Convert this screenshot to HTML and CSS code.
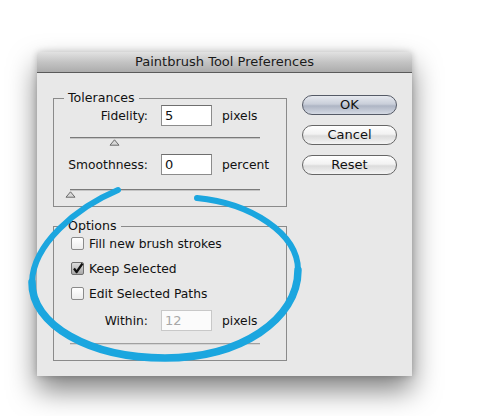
FILE: index.html
```html
<!DOCTYPE html>
<html>
<head>
<meta charset="utf-8">
<link rel="stylesheet" href="styles.css">
</head>
<body>
<div class="stage">
  <div class="dialog">
    <div class="titlebar">Paintbrush Tool Preferences</div>
    <div class="content">
      <div class="groups">
        <fieldset class="group tolerances">
          <legend>Tolerances</legend>
          <div class="row first">
            <span class="label">Fidelity:</span>
            <span class="input">5</span>
            <span class="unit">pixels</span>
          </div>
          <div class="slider s1">
            <div class="track"></div>
            <svg class="thumb" style="margin-left:39px" width="11" height="7" viewBox="0 0 11 7"><path d="M5.5 0.8 L10 6.2 L1 6.2 Z" fill="#d8d8d8" stroke="#6a6a6a" stroke-width="1"/></svg>
          </div>
          <div class="row">
            <span class="label">Smoothness:</span>
            <span class="input">0</span>
            <span class="unit">percent</span>
          </div>
          <div class="slider s2">
            <div class="track"></div>
            <svg class="thumb" style="margin-left:-5px" width="11" height="7" viewBox="0 0 11 7"><path d="M5.5 0.8 L10 6.2 L1 6.2 Z" fill="#d8d8d8" stroke="#6a6a6a" stroke-width="1"/></svg>
          </div>
        </fieldset>
        <fieldset class="group options">
          <legend>Options</legend>
          <div class="check"><span class="box"></span><span>Fill new brush strokes</span></div>
          <div class="check"><span class="box checked"><svg width="13" height="13" viewBox="0 0 13 13"><path d="M3 6.5 L5.6 10 L11.5 1.5" fill="none" stroke="#111" stroke-width="2.2" stroke-linejoin="round"/></svg></span><span>Keep Selected</span></div>
          <div class="check"><span class="box"></span><span>Edit Selected Paths</span></div>
          <div class="row within">
            <span class="label">Within:</span>
            <span class="input disabled">12</span>
            <span class="unit">pixels</span>
          </div>
          <div class="slider off">
            <div class="track"></div>
          </div>
        </fieldset>
      </div>
      <div class="buttons">
        <div class="btn default">OK</div>
        <div class="btn">Cancel</div>
        <div class="btn">Reset</div>
      </div>
    </div>
  </div>
  <svg class="circle" width="500" height="416" viewBox="0 0 500 416">
    <path d="M197 198 C250 203 298 233 298 270 C298 320 240 358 165 358 C90 358 31 325 32 282 C33 245 75 208 118 190" fill="none" stroke="#1ba6df" stroke-width="6" stroke-linecap="round"/>
    <path d="M298 270 C298 320 240 358 165 358 C90 358 31 325 32 282" fill="none" stroke="#1ba6df" stroke-width="7.5" stroke-linecap="round"/>
  </svg>
</div>
</body>
</html>
```
FILE: styles.css
```css
html, body {
  margin: 0;
  padding: 0;
  background: #ffffff;
}
.stage {
  position: relative;
  width: 500px;
  height: 416px;
  padding: 52px 0 0 37px;
  box-sizing: border-box;
  font-family: "DejaVu Sans", "Liberation Sans", sans-serif;
  font-size: 12.3px;
  color: #111;
  overflow: hidden;
}
.dialog {
  width: 375px;
  height: 324px;
  background: #e8e8e8;
  border-radius: 4px 4px 0 0;
  box-shadow: 0 14px 28px rgba(0, 0, 0, 0.5), 0 0 7px rgba(0, 0, 0, 0.2);
  display: flex;
  flex-direction: column;
}
.titlebar {
  height: 20px;
  line-height: 20px;
  text-align: center;
  font-size: 13px;
  color: #1a1a1a;
  background: linear-gradient(#e2e2e2, #c4c4c4 50%, #acacac);
  border-bottom: 1px solid #5a5a5a;
  border-radius: 4px 4px 0 0;
}
.content {
  display: flex;
  padding: 17px 0 0 16px;
}
.groups {
  display: flex;
  flex-direction: column;
  width: 234px;
}
.group {
  margin: 0;
  padding: 0;
  border: 1px solid #8a8a8a;
  min-width: 0;
}
.group legend {
  margin-left: 10px;
  padding: 0 4px;
  font-size: 12.6px;
  line-height: 16px;
}
.tolerances {
  height: 115px;
}
.options {
  margin-top: 11px;
  height: 141px;
}
.row {
  display: flex;
  align-items: center;
  height: 21px;
}
.tolerances .row.first {
  margin-top: -1px;
}
.label {
  width: 94px;
  text-align: right;
}
.input {
  margin-left: 13px;
  background: #fff;
  border: 1px solid #8c8c8c;
  border-top-color: #6e6e6e;
  padding: 0 0 0 3px;
  box-sizing: border-box;
  width: 51px;
  height: 21px;
  line-height: 19px;
  font-size: 13px;
}
.input.disabled {
  color: #a8a8a8;
  border-color: #c8c8c8;
  background: #fbfbfb;
}
.unit {
  margin-left: 10px;
}
.slider {
  display: flex;
  flex-direction: column;
  margin-left: 16px;
  width: 190px;
}
.track {
  height: 1px;
  background: #7a7a7a;
  border-bottom: 1px solid #c4c4c4;
}
.slider.s1 {
  margin-top: 11px;
  height: 17px;
}
.slider.s2 {
  margin-top: 14px;
}
.thumb {
  display: block;
}
.check {
  display: flex;
  align-items: center;
  height: 25px;
  padding-left: 17px;
}
.options .check:first-of-type {
  margin-top: -3px;
}
.box {
  width: 13px;
  height: 13px;
  box-sizing: border-box;
  border: 1px solid #8a8a8a;
  border-radius: 2px;
  background: linear-gradient(#ffffff, #ececec);
  margin-right: 5px;
  display: flex;
}
.box.checked {
  background: linear-gradient(#dcdcdc, #a8a8a8);
  border-color: #6f6f6f;
}
.box svg {
  margin: -1px 0 0 -1px;
  overflow: visible;
}
.within {
  margin-top: 4px;
}
.slider.off {
  margin-top: 12px;
}
.slider.off .track {
  background: #a0a0a0;
  border-bottom-color: #d4d4d4;
}
.buttons {
  display: flex;
  flex-direction: column;
  gap: 10px;
  margin: 5px 0 0 15px;
}
.btn {
  width: 95px;
  height: 20px;
  box-sizing: border-box;
  border: 1px solid #666;
  border-radius: 10px;
  background: linear-gradient(#ffffff, #f2f2f2 45%, #dcdcdc 55%, #f4f4f4);
  text-align: center;
  line-height: 18px;
  font-size: 13px;
}
.btn.default {
  background: linear-gradient(#e6e9ef, #c9ced9 45%, #aeb5c4 55%, #d4d9e3);
  border-color: #555a66;
}
.circle {
  position: absolute;
  left: 0;
  top: 0;
  pointer-events: none;
}
```
